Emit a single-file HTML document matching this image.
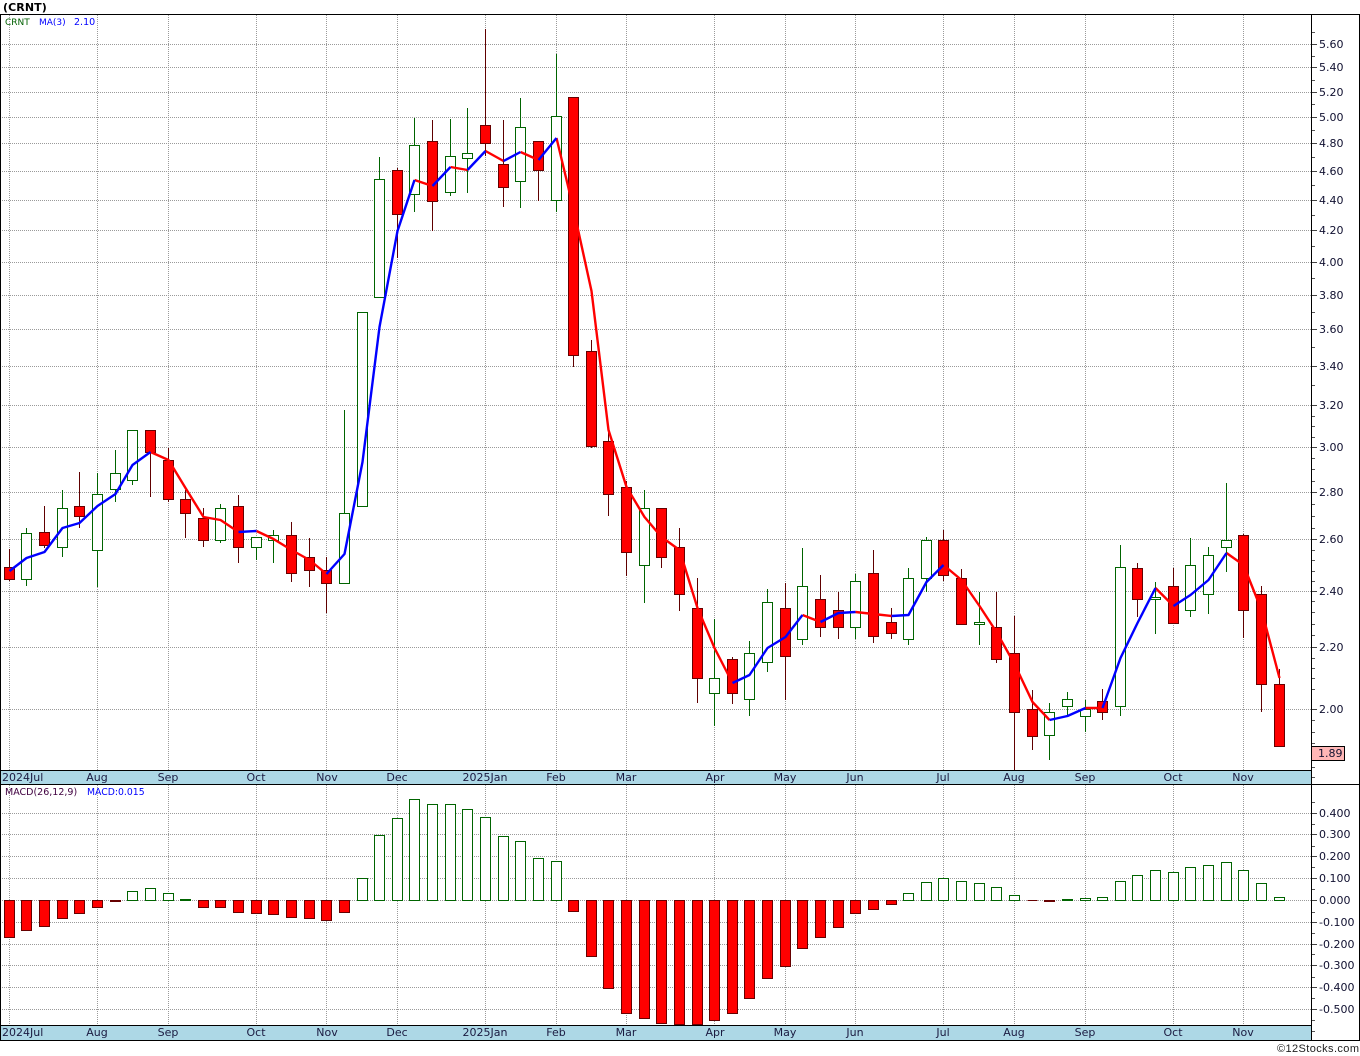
<!DOCTYPE html>
<html lang="en">
<head>
<meta charset="utf-8">
<title>CRNT</title>
<style>
html,body{margin:0;padding:0;background:#fff;width:1360px;height:1056px;overflow:hidden}
svg{display:block}
text{font-family:"DejaVu Sans","Liberation Sans",sans-serif;font-size:11px;fill:#101030}
.s{font-size:9px}
.d{fill:#1a1a40}
</style>
</head>
<body>
<svg xmlns="http://www.w3.org/2000/svg" width="1360" height="1056" viewBox="0 0 1360 1056">
<rect width="1360" height="1056" fill="#fff"/>
<!-- date bands -->
<rect x="0" y="770" width="1311" height="14" fill="#ADD8E6"/>
<rect x="0" y="1025" width="1311" height="15" fill="#ADD8E6"/>
<!-- grid -->
<g shape-rendering="crispEdges" fill="none" stroke="#9a9a9a" stroke-width="1" stroke-dasharray="1 1">
<path d="M0 44.5H1317M0 67.5H1317M0 92.5H1317M0 117.5H1317M0 143.5H1317M0 171.5H1317M0 200.5H1317M0 230.5H1317M0 262.5H1317M0 295.5H1317M0 329.5H1317M0 366.5H1317M0 405.5H1317M0 447.5H1317M0 492.5H1317M0 539.5H1317M0 591.5H1317M0 647.5H1317M0 709.5H1317"/>
<path d="M0 813.5H1317M0 834.5H1317M0 856.5H1317M0 878.5H1317M0 900.5H1317M0 922.5H1317M0 944.5H1317M0 965.5H1317M0 987.5H1317M0 1009.5H1317"/>
<path d="M9.5 15V770M97.5 15V770M168.5 15V770M256.5 15V770M326.5 15V770M397.5 15V770M485.5 15V770M556.5 15V770M626.5 15V770M714.5 15V770M785.5 15V770M855.5 15V770M943.5 15V770M1014.5 15V770M1085.5 15V770M1173.5 15V770M1243.5 15V770"/>
<path d="M9.5 785V1025M97.5 785V1025M168.5 785V1025M256.5 785V1025M326.5 785V1025M397.5 785V1025M485.5 785V1025M556.5 785V1025M626.5 785V1025M714.5 785V1025M785.5 785V1025M855.5 785V1025M943.5 785V1025M1014.5 785V1025M1085.5 785V1025M1173.5 785V1025M1243.5 785V1025"/>
</g>
<!-- axis ticks -->
<g shape-rendering="crispEdges" fill="none" stroke="#555" stroke-width="1">
<path d="M1311 32.5h4M1311 56.5h4M1311 80.5h4M1311 104.5h4M1311 130.5h4M1311 157.5h4M1311 185.5h4M1311 215.5h4M1311 246.5h4M1311 278.5h4M1311 312.5h4M1311 347.5h4M1311 385.5h4M1311 416.5h4M1311 426.5h4M1311 437.5h4M1311 458.5h4M1311 469.5h4M1311 481.5h4M1311 504.5h4M1311 516.5h4M1311 528.5h4M1311 550.5h4M1311 560.5h4M1311 571.5h4M1311 581.5h4M1311 601.5h4M1311 612.5h4M1311 624.5h4M1311 635.5h4M1311 658.5h4M1311 668.5h4M1311 678.5h4M1311 689.5h4M1311 720.5h4M1311 732.5h4M1311 743.5h4M1311 767.5h4M1311 777.5h4"/>
<path d="M1311 802.5h4M1311 824.5h4M1311 846.5h4M1311 867.5h4M1311 889.5h4M1311 912.5h4M1311 933.5h4M1311 954.5h4M1311 977.5h4M1311 998.5h4M1311 1020.5h4M1311 1031.5h4"/>
</g>
<g shape-rendering="crispEdges" fill="none" stroke="#444" stroke-width="1">
<path d="M1311 44.5h6M1311 67.5h6M1311 92.5h6M1311 117.5h6M1311 143.5h6M1311 171.5h6M1311 200.5h6M1311 230.5h6M1311 262.5h6M1311 295.5h6M1311 329.5h6M1311 366.5h6M1311 405.5h6M1311 447.5h6M1311 492.5h6M1311 539.5h6M1311 591.5h6M1311 647.5h6M1311 709.5h6M1311 813.5h6M1311 834.5h6M1311 856.5h6M1311 878.5h6M1311 900.5h6M1311 922.5h6M1311 944.5h6M1311 965.5h6M1311 987.5h6M1311 1009.5h6"/>
</g>
<!-- wicks -->
<g shape-rendering="crispEdges" fill="none" stroke-width="1">
<path stroke="#600000" d="M9.5 549V581M44.5 506V548M79.5 472V528M150.5 430V497M168.5 448V502M185.5 490V538M203.5 508V547M238.5 495V563M291.5 522V582M309.5 538V587M326.5 557V613M397.5 168V258M432.5 120V231M485.5 29V156M503.5 120V207M538.5 141V201M573.5 97V367M591.5 340V448M608.5 430V516M626.5 481V576M661.5 508V568M679.5 528V611M697.5 578V703M732.5 657V704M785.5 583V700M820.5 575V637M838.5 592V639M873.5 550V643M891.5 608V639M943.5 530V581M961.5 569V624M996.5 592V663M1014.5 616V770M1032.5 690V750M1102.5 689V720M1137.5 563V617M1173.5 568V624M1243.5 534V638M1261.5 586V712M1279.5 669V746"/>
<path stroke="#006400" d="M26.5 528V586M62.5 490V557M97.5 473V587M115.5 450V502M132.5 430V485M220.5 504V543M256.5 537V560M273.5 530V563M344.5 410V583M362.5 312V506M379.5 157V297M414.5 118V212M450.5 119V196M467.5 108V193M520.5 98V208M556.5 54V212M644.5 490V603M714.5 619V726M749.5 641V716M767.5 589V672M802.5 548V645M855.5 574V639M908.5 568V645M926.5 537V592M979.5 592V645M1049.5 703V760M1067.5 692V716M1085.5 700V732M1120.5 545V716M1155.5 582V634M1190.5 538V617M1208.5 547V614M1226.5 483V572"/>
<!-- price bodies -->
<path fill="#ff0000" stroke="#660000" d="M4.5 567.5h10v12h-10zM39.5 532.5h10v13h-10zM74.5 506.5h10v10h-10zM145.5 430.5h10v22h-10zM163.5 460.5h10v39h-10zM180.5 499.5h10v14h-10zM198.5 518.5h10v22h-10zM233.5 506.5h10v41h-10zM286.5 535.5h10v38h-10zM304.5 557.5h10v13h-10zM321.5 570.5h10v13h-10zM392.5 170.5h10v44h-10zM427.5 141.5h10v60h-10zM480.5 125.5h10v18h-10zM498.5 164.5h10v23h-10zM533.5 141.5h10v29h-10zM568.5 97.5h10v258h-10zM586.5 351.5h10v95h-10zM603.5 441.5h10v53h-10zM621.5 487.5h10v65h-10zM656.5 508.5h10v49h-10zM674.5 547.5h10v47h-10zM692.5 608.5h10v70h-10zM727.5 659.5h10v34h-10zM780.5 608.5h10v48h-10zM815.5 599.5h10v28h-10zM833.5 610.5h10v17h-10zM868.5 573.5h10v63h-10zM886.5 622.5h10v11h-10zM938.5 540.5h10v35h-10zM956.5 578.5h10v46h-10zM991.5 627.5h10v32h-10zM1009.5 653.5h10v59h-10zM1027.5 709.5h10v27h-10zM1097.5 701.5h10v11h-10zM1132.5 568.5h10v31h-10zM1168.5 586.5h10v37h-10zM1238.5 535.5h10v75h-10zM1256.5 594.5h10v90h-10zM1274.5 684.5h10v62h-10z"/>
<path fill="#fff" stroke="#006400" d="M21.5 533.5h10v46h-10zM57.5 508.5h10v39h-10zM92.5 494.5h10v56h-10zM110.5 473.5h10v16h-10zM127.5 430.5h10v50h-10zM215.5 508.5h10v32h-10zM251.5 537.5h10v10h-10zM268.5 535.5h10v5h-10zM339.5 513.5h10v70h-10zM357.5 312.5h10v194h-10zM374.5 179.5h10v118h-10zM409.5 145.5h10v49h-10zM445.5 156.5h10v36h-10zM462.5 153.5h10v5h-10zM515.5 127.5h10v54h-10zM551.5 116.5h10v84h-10zM639.5 508.5h10v57h-10zM709.5 678.5h10v15h-10zM744.5 653.5h10v46h-10zM762.5 602.5h10v60h-10zM797.5 586.5h10v53h-10zM850.5 581.5h10v46h-10zM903.5 578.5h10v61h-10zM921.5 540.5h10v38h-10zM974.5 622.5h10v2h-10zM1044.5 712.5h10v23h-10zM1062.5 699.5h10v7h-10zM1080.5 709.5h10v7h-10zM1115.5 567.5h10v139h-10zM1150.5 597.5h10v2h-10zM1185.5 565.5h10v45h-10zM1203.5 555.5h10v39h-10zM1221.5 540.5h10v7h-10z"/>
<!-- macd bodies -->
<path fill="#ff0000" stroke="#660000" d="M4.5 900.5h10v37h-10zM21.5 900.5h10v30h-10zM39.5 900.5h10v26h-10zM57.5 900.5h10v18h-10zM74.5 900.5h10v13h-10zM92.5 900.5h10v7h-10zM110.5 900.5h10v1h-10zM198.5 900.5h10v7h-10zM215.5 900.5h10v7h-10zM233.5 900.5h10v12h-10zM251.5 900.5h10v13h-10zM268.5 900.5h10v14h-10zM286.5 900.5h10v17h-10zM304.5 900.5h10v18h-10zM321.5 900.5h10v20h-10zM339.5 900.5h10v12h-10zM568.5 900.5h10v11h-10zM586.5 900.5h10v56h-10zM603.5 900.5h10v88h-10zM621.5 900.5h10v113h-10zM639.5 900.5h10v118h-10zM656.5 900.5h10v123h-10zM674.5 900.5h10v124h-10zM692.5 900.5h10v124h-10zM709.5 900.5h10v120h-10zM727.5 900.5h10v113h-10zM744.5 900.5h10v98h-10zM762.5 900.5h10v78h-10zM780.5 900.5h10v66h-10zM797.5 900.5h10v48h-10zM815.5 900.5h10v37h-10zM833.5 900.5h10v27h-10zM850.5 900.5h10v13h-10zM868.5 900.5h10v9h-10zM886.5 900.5h10v4h-10zM1027.5 900.5h10M1044.5 900.5h10v1h-10z"/>
<path fill="#fff" stroke="#006400" d="M127.5 891.5h10v9h-10zM145.5 888.5h10v12h-10zM163.5 893.5h10v7h-10zM180.5 899.5h10v1h-10zM357.5 878.5h10v22h-10zM374.5 835.5h10v65h-10zM392.5 818.5h10v82h-10zM409.5 799.5h10v101h-10zM427.5 804.5h10v96h-10zM445.5 804.5h10v96h-10zM462.5 809.5h10v91h-10zM480.5 817.5h10v83h-10zM498.5 836.5h10v64h-10zM515.5 841.5h10v59h-10zM533.5 858.5h10v42h-10zM551.5 861.5h10v39h-10zM903.5 893.5h10v7h-10zM921.5 882.5h10v18h-10zM938.5 878.5h10v22h-10zM956.5 881.5h10v19h-10zM974.5 883.5h10v17h-10zM991.5 887.5h10v13h-10zM1009.5 895.5h10v5h-10zM1062.5 899.5h10v1h-10zM1080.5 898.5h10v2h-10zM1097.5 897.5h10v3h-10zM1115.5 881.5h10v19h-10zM1132.5 875.5h10v25h-10zM1150.5 870.5h10v30h-10zM1168.5 872.5h10v28h-10zM1185.5 867.5h10v33h-10zM1203.5 865.5h10v35h-10zM1221.5 862.5h10v38h-10zM1238.5 870.5h10v30h-10zM1256.5 883.5h10v17h-10zM1274.5 897.5h10v3h-10z"/>
</g>
<!-- moving average -->
<g fill="none" stroke-width="2.4" stroke-linejoin="round">
<path stroke="#ff0000" d="M150.5 452L168.5 460L185.5 488L203.5 517L220.5 520L238.5 532M256.5 531L273.5 539L291.5 550L309.5 560L326.5 574M414.5 180L432.5 186M450.5 167L467.5 170M485.5 151L503.5 161M520.5 152L538.5 160M556.5 138L573.5 209L591.5 291L608.5 430L626.5 487L644.5 517L661.5 537L679.5 550L697.5 608L714.5 648L732.5 683M802.5 615L820.5 622M855.5 612L873.5 614L891.5 616M943.5 565L961.5 580L979.5 606L996.5 632L1014.5 664L1032.5 702L1049.5 720M1085.5 708L1102.5 708M1155.5 588L1173.5 606M1226.5 553L1243.5 565L1261.5 610L1279.5 678"/>
<path stroke="#0000ff" d="M9.5 571L26.5 558L44.5 552L62.5 528L79.5 523L97.5 506L115.5 494L132.5 465L150.5 452M238.5 532L256.5 531M326.5 574L344.5 554L362.5 462L379.5 327L397.5 231L414.5 180M432.5 186L450.5 167M467.5 170L485.5 151M503.5 161L520.5 152M538.5 160L556.5 138M732.5 683L749.5 675L767.5 648L785.5 637L802.5 615M820.5 622L838.5 613L855.5 612M891.5 616L908.5 615L926.5 582L943.5 565M1049.5 720L1067.5 716L1085.5 708M1102.5 708L1120.5 658L1137.5 623L1155.5 588M1173.5 606L1190.5 595L1208.5 580L1226.5 553"/>
</g>
<!-- frame -->
<g shape-rendering="crispEdges" fill="none" stroke="#000" stroke-width="1">
<path d="M0 14.5H1360M0.5 14V1040M1311.5 14V1040M1359.5 14V1040M0 770.5H1311M0 784.5H1360M0 1025.5H1311M0 1040.5H1360"/>
</g>
<!-- price tag -->
<rect x="1311.5" y="746.5" width="33" height="14" fill="#FFB6B6" stroke="#000" shape-rendering="crispEdges"/>
<text x="1318" y="757">1.89</text>
<!-- title and legends -->
<text x="3" y="11" style="font-weight:bold;fill:#000;letter-spacing:.1px">(CRNT)</text>
<text class="s" x="5" y="25" style="fill:#006000">CRNT</text>
<text class="s" x="39" y="25" style="fill:#0000ff">MA(3)</text>
<text class="s" x="74" y="25" style="fill:#0000ff;font-size:9.5px">2.10</text>
<text class="s" x="5" y="795" style="fill:#400040;font-size:9.5px">MACD(26,12,9)</text>
<text class="s" x="87" y="795" style="fill:#0000ff;font-size:9.3px">MACD:0.015</text>
<!-- price axis labels -->
<g>
<text x="1319" y="48">5.60</text><text x="1319" y="71">5.40</text><text x="1319" y="96">5.20</text><text x="1319" y="121">5.00</text><text x="1319" y="147">4.80</text><text x="1319" y="175">4.60</text><text x="1319" y="204">4.40</text><text x="1319" y="234">4.20</text><text x="1319" y="266">4.00</text><text x="1319" y="299">3.80</text><text x="1319" y="333">3.60</text><text x="1319" y="370">3.40</text><text x="1319" y="409">3.20</text><text x="1319" y="451">3.00</text><text x="1319" y="496">2.80</text><text x="1319" y="543">2.60</text><text x="1319" y="595">2.40</text><text x="1319" y="651">2.20</text><text x="1319" y="713">2.00</text>
<text x="1319" y="817">0.400</text><text x="1319" y="838">0.300</text><text x="1319" y="860">0.200</text><text x="1319" y="882">0.100</text><text x="1319" y="904">0.000</text><text x="1319" y="926">-0.100</text><text x="1319" y="948">-0.200</text><text x="1319" y="969">-0.300</text><text x="1319" y="991">-0.400</text><text x="1319" y="1013">-0.500</text>
</g>
<!-- date labels -->
<g class="dates">
<text class="d" x="2" y="781">2024Jul</text>
<text class="d" x="97" y="781" text-anchor="middle">Aug</text><text class="d" x="168" y="781" text-anchor="middle">Sep</text><text class="d" x="256" y="781" text-anchor="middle">Oct</text><text class="d" x="327" y="781" text-anchor="middle">Nov</text><text class="d" x="397" y="781" text-anchor="middle">Dec</text><text class="d" x="485" y="781" text-anchor="middle">2025Jan</text><text class="d" x="556" y="781" text-anchor="middle">Feb</text><text class="d" x="626" y="781" text-anchor="middle">Mar</text><text class="d" x="715" y="781" text-anchor="middle">Apr</text><text class="d" x="785" y="781" text-anchor="middle">May</text><text class="d" x="855" y="781" text-anchor="middle">Jun</text><text class="d" x="943" y="781" text-anchor="middle">Jul</text><text class="d" x="1014" y="781" text-anchor="middle">Aug</text><text class="d" x="1085" y="781" text-anchor="middle">Sep</text><text class="d" x="1173" y="781" text-anchor="middle">Oct</text><text class="d" x="1243" y="781" text-anchor="middle">Nov</text>
<text class="d" x="2" y="1036">2024Jul</text>
<text class="d" x="97" y="1036" text-anchor="middle">Aug</text><text class="d" x="168" y="1036" text-anchor="middle">Sep</text><text class="d" x="256" y="1036" text-anchor="middle">Oct</text><text class="d" x="327" y="1036" text-anchor="middle">Nov</text><text class="d" x="397" y="1036" text-anchor="middle">Dec</text><text class="d" x="485" y="1036" text-anchor="middle">2025Jan</text><text class="d" x="556" y="1036" text-anchor="middle">Feb</text><text class="d" x="626" y="1036" text-anchor="middle">Mar</text><text class="d" x="715" y="1036" text-anchor="middle">Apr</text><text class="d" x="785" y="1036" text-anchor="middle">May</text><text class="d" x="855" y="1036" text-anchor="middle">Jun</text><text class="d" x="943" y="1036" text-anchor="middle">Jul</text><text class="d" x="1014" y="1036" text-anchor="middle">Aug</text><text class="d" x="1085" y="1036" text-anchor="middle">Sep</text><text class="d" x="1173" y="1036" text-anchor="middle">Oct</text><text class="d" x="1243" y="1036" text-anchor="middle">Nov</text>
</g>
<text x="1277" y="1052" style="font-family:'Liberation Sans',sans-serif;fill:#222;letter-spacing:.4px">©12Stocks.com</text>
</svg>
</body>
</html>
